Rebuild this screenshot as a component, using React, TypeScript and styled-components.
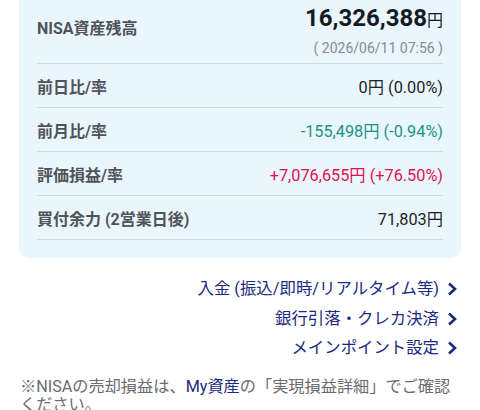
import styled, { createGlobalStyle } from "styled-components";

const GlobalStyle = createGlobalStyle`
  body {
    margin: 0;
    background: #ffffff;
    font-family: Roboto, "Noto Sans CJK JP", sans-serif;
  }
`;

const rows = [
  { label: "前日比/率", value: "0円 (0.00%)", tone: "plain" },
  { label: "前月比/率", value: "-155,498円 (-0.94%)", tone: "down" },
  { label: "評価損益/率", value: "+7,076,655円 (+76.50%)", tone: "up" },
  { label: "買付余力 (2営業日後)", value: "71,803円", tone: "plain" },
];

const links = ["入金 (振込/即時/リアルタイム等)", "銀行引落・クレカ決済", "メインポイント設定"];

export default function App() {
  return (
    <Page>
      <GlobalStyle />
      <Card>
        <TopRow>
          <Label>NISA資産残高</Label>
          <Total>
            <Amount>
              16,326,388<Yen>円</Yen>
            </Amount>
            <Stamp>( 2026/06/11 07:56 )</Stamp>
          </Total>
        </TopRow>
        {rows.map((r) => (
          <Row key={r.label}>
            <Label>{r.label}</Label>
            <Value $tone={r.tone}>{r.value}</Value>
          </Row>
        ))}
      </Card>
      <Links>
        {links.map((l) => (
          <LinkItem key={l}>
            {l}
            <Chevron viewBox="0 0 12 16">
              <path d="M3 2.5 L9 8 L3 13.5" />
            </Chevron>
          </LinkItem>
        ))}
      </Links>
      <Note>
        ※NISAの売却損益は、<NoteLink>My資産</NoteLink>の「実現損益詳細」でご確認ください。
      </Note>
    </Page>
  );
}

const Page = styled.div`
  width: 480px;
  height: 410px;
  overflow: hidden;
`;

const Card = styled.div`
  margin: -14px 19px 0;
  padding: 14px 18px 18px;
  background: #e9f6fd;
  border-radius: 10px;
`;

const TopRow = styled.div`
  display: flex;
  justify-content: space-between;
  align-items: flex-start;
  height: 63px;
  border-bottom: 1px solid #cdd8e0;
`;

const Row = styled.div`
  display: flex;
  justify-content: space-between;
  align-items: center;
  height: 43px;
  border-bottom: 1px solid #cdd8e0;
`;

const Label = styled.div`
  font-size: 16px;
  font-weight: 700;
  color: #505357;
  ${TopRow} & {
    margin-top: 15px;
  }
`;

const Total = styled.div`
  display: flex;
  flex-direction: column;
  align-items: flex-end;
`;

const Amount = styled.div`
  font-size: 24px;
  font-weight: 700;
  color: #141a24;
  line-height: 34px;
  margin-top: 1px;
`;

const Yen = styled.span`
  font-size: 16px;
  font-weight: 400;
`;

const Stamp = styled.div`
  font-size: 14px;
  color: #888b90;
  line-height: 18px;
  margin-top: 1px;
`;

const Value = styled.div<{ $tone: string }>`
  font-size: 16.3px;
  color: ${(p) => (p.$tone === "down" ? "#1a9484" : p.$tone === "up" ? "#e0104e" : "#1c1f24")};
`;

const Links = styled.div`
  display: flex;
  flex-direction: column;
  align-items: flex-end;
  gap: 7px;
  padding: 20px 22px 0 0;
`;

const LinkItem = styled.div`
  display: flex;
  align-items: center;
  gap: 7px;
  font-size: 16.4px;
  line-height: 22.5px;
  color: #1c2a80;
`;

const Chevron = styled.svg`
  width: 12px;
  height: 16px;
  fill: none;
  stroke: #1c2a80;
  stroke-width: 2.6;
`;

const Note = styled.p`
  margin: 18px 20px 0 20px;
  font-size: 16.2px;
  line-height: 18px;
  color: #6a6d72;
`;

const NoteLink = styled.span`
  color: #1c2a80;
`;
